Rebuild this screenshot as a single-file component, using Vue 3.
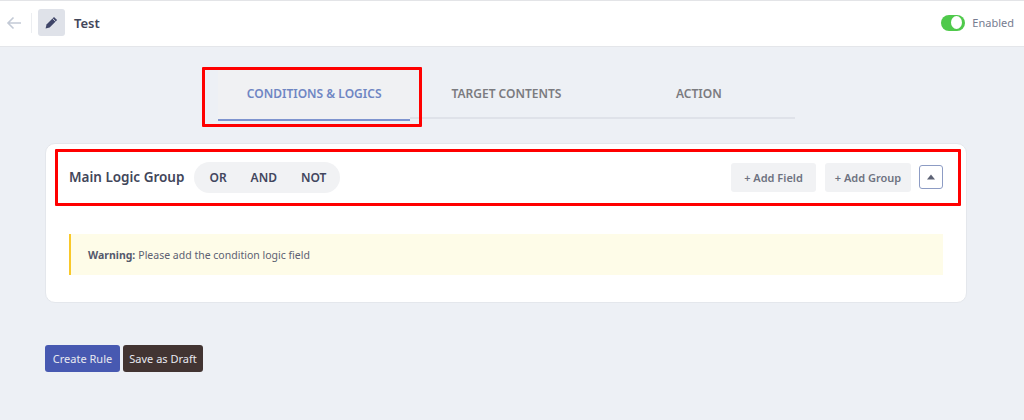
<script setup>
const tabs = ["CONDITIONS & LOGICS", "TARGET CONTENTS", "ACTION"];
const logics = ["OR", "AND", "NOT"];
</script>

<template>
  <main class="page">
    <header class="topbar">
      <svg class="back" width="16" height="14" viewBox="0 0 16 14" fill="none">
        <path d="M15 7H2M7.5 1.5 2 7l5.5 5.5" stroke="#c3cad6" stroke-width="1.6" />
      </svg>
      <span class="divider"></span>
      <span class="edit-box">
        <svg width="13" height="13" viewBox="0 0 13 13">
          <path d="M9 .9 12.1 4 4.6 11.5.6 12.4 1.5 8.4Z" fill="#3f4568" />
          <path d="M7.6 2.5 10.5 5.4" stroke="#dfe2e9" stroke-width=".9" />
        </svg>
      </span>
      <span class="rule-name">Test</span>
      <span class="status">
        <span class="toggle"><span class="knob"></span></span>
        <span class="status-text">Enabled</span>
      </span>
    </header>

    <nav class="tabs">
      <div v-for="(tab, i) in tabs" :key="tab" class="tab" :class="{ active: i === 0 }">
        {{ tab }}
        <span v-if="i === 0" class="mark mark-tab"></span>
      </div>
    </nav>

    <section class="card">
      <div class="group-head">
        <span class="mark mark-head"></span>
        <h2 class="group-title">Main Logic Group</h2>
        <div class="pill">
          <span v-for="item in logics" :key="item" class="pill-item">{{ item }}</span>
        </div>
        <button class="add add-field">+ Add Field</button>
        <button class="add add-group">+ Add Group</button>
        <button class="collapse">
          <svg width="8" height="6" viewBox="0 0 8 6"><path d="M4 .5 8 5.5H0Z" fill="#5d6275" /></svg>
        </button>
      </div>
      <p class="warning"><b>Warning:</b> Please add the condition logic field</p>
    </section>

    <footer class="actions">
      <button class="btn create">Create Rule</button>
      <button class="btn draft">Save as Draft</button>
    </footer>
  </main>
</template>

<style>
body { background: #edf0f5; }
</style>

<style scoped>
* { box-sizing: border-box; }
.page {
  height: 420px;
  overflow: hidden;
  background: #edf0f5;
  font-family: "Noto Sans", "Open Sans", sans-serif;
  color: #3f4356;
}
.topbar {
  height: 47px;
  display: flex;
  align-items: center;
  padding: 0 10px 2px 6px;
  background: #fff;
  border-top: 1px solid #e3e4e7;
  border-bottom: 1px solid #e4e6ea;
}
.back { flex: none; }
.divider { width: 1px; height: 20px; margin: 0 6px 0 9px; background: #eceef1; }
.edit-box {
  width: 27px;
  height: 27px;
  display: flex;
  align-items: center;
  justify-content: center;
  background: #dfe2e9;
  border-radius: 3px;
}
.rule-name { margin-left: 9px; font-size: 13px; font-weight: 600; color: #42465a; }
.status { margin-left: auto; display: flex; align-items: center; gap: 7px; }
.toggle {
  width: 24px;
  height: 16px;
  display: flex;
  justify-content: flex-end;
  align-items: center;
  padding-right: 3px;
  background: #4fc94b;
  border-radius: 8px;
}
.knob { width: 11px; height: 13px; background: #fff; border-radius: 50%; }
.status-text { font-size: 11px; color: #767c90; }

.tabs {
  width: 577px;
  height: 72px;
  margin: 0 0 0 218px;
  padding-top: 23px;
  display: grid;
  grid-template-columns: repeat(3, 1fr);
  border-bottom: 2px solid #dfe2e9;
}
.tab {
  position: relative;
  height: 49px;
  padding-top: 16px;
  text-align: center;
  font-size: 12px;
  font-weight: 600;
  line-height: 16px;
  color: #7b7b80;
}
.tab.active {
  background: #f0f1f3;
  color: #6f86c3;
  height: 49px;
  box-shadow: 0 1px 0 #7f94cf, 0 2px 0 #7f94cf;
}
.mark { position: absolute; border: 3px solid #f00; border-radius: 1px; pointer-events: none; }
.mark-tab { left: -16px; right: -12px; top: -3px; bottom: -8px; }

.card {
  width: 922px;
  height: 160px;
  margin: 24px 0 0 45px;
  padding: 17px 23px 0;
  background: #fff;
  border: 1px solid #e4e7ec;
  border-radius: 10px;
}
.group-head { position: relative; height: 32px; display: flex; align-items: center; }
.mark-head { left: -14px; right: -18px; top: -12px; bottom: -13px; }
.group-title { margin: 0 10px 0 0; font-size: 13.5px; font-weight: 600; color: #42465a; }
.pill {
  height: 31px;
  width: 146px;
  display: flex;
  align-items: center;
  padding-left: 15px;
  gap: 24px;
  background: #f1f2f4;
  border-radius: 16px;
}
.pill-item { font-size: 12px; font-weight: 600; color: #42465e; }
.add {
  height: 29px;
  padding: 0;
  border: 0;
  border-radius: 3px;
  background: #f1f2f4;
  font: 600 11px "Noto Sans", "Open Sans", sans-serif;
  color: #6e7281;
}
.add-field { width: 85px; margin-left: auto; }
.add-group { width: 86px; margin-left: 9px; }
.collapse {
  width: 24px;
  height: 24px;
  margin-left: 8px;
  padding: 0;
  display: flex;
  align-items: center;
  justify-content: center;
  background: #fff;
  border: 1px solid #8d9cc4;
  border-radius: 3px;
}
.warning {
  height: 41px;
  margin: 41px 0 0;
  padding-left: 17px;
  display: flex;
  align-items: center;
  gap: 3px;
  background: #fefce8;
  border-left: 2px solid #f9c82a;
  font-size: 10.5px;
  color: #5c6072;
}
.warning b { font-weight: 700; color: #54586c; }

.actions { margin: 42px 0 0 45px; display: flex; gap: 3px; }
.btn {
  height: 27px;
  padding: 0;
  border: 0;
  border-radius: 3px;
  font: 400 11px "Noto Sans", "Open Sans", sans-serif;
  color: #e8e9f0;
}
.create { width: 75px; background: #4759b1; }
.draft { width: 80px; background: #423432; }
</style>
